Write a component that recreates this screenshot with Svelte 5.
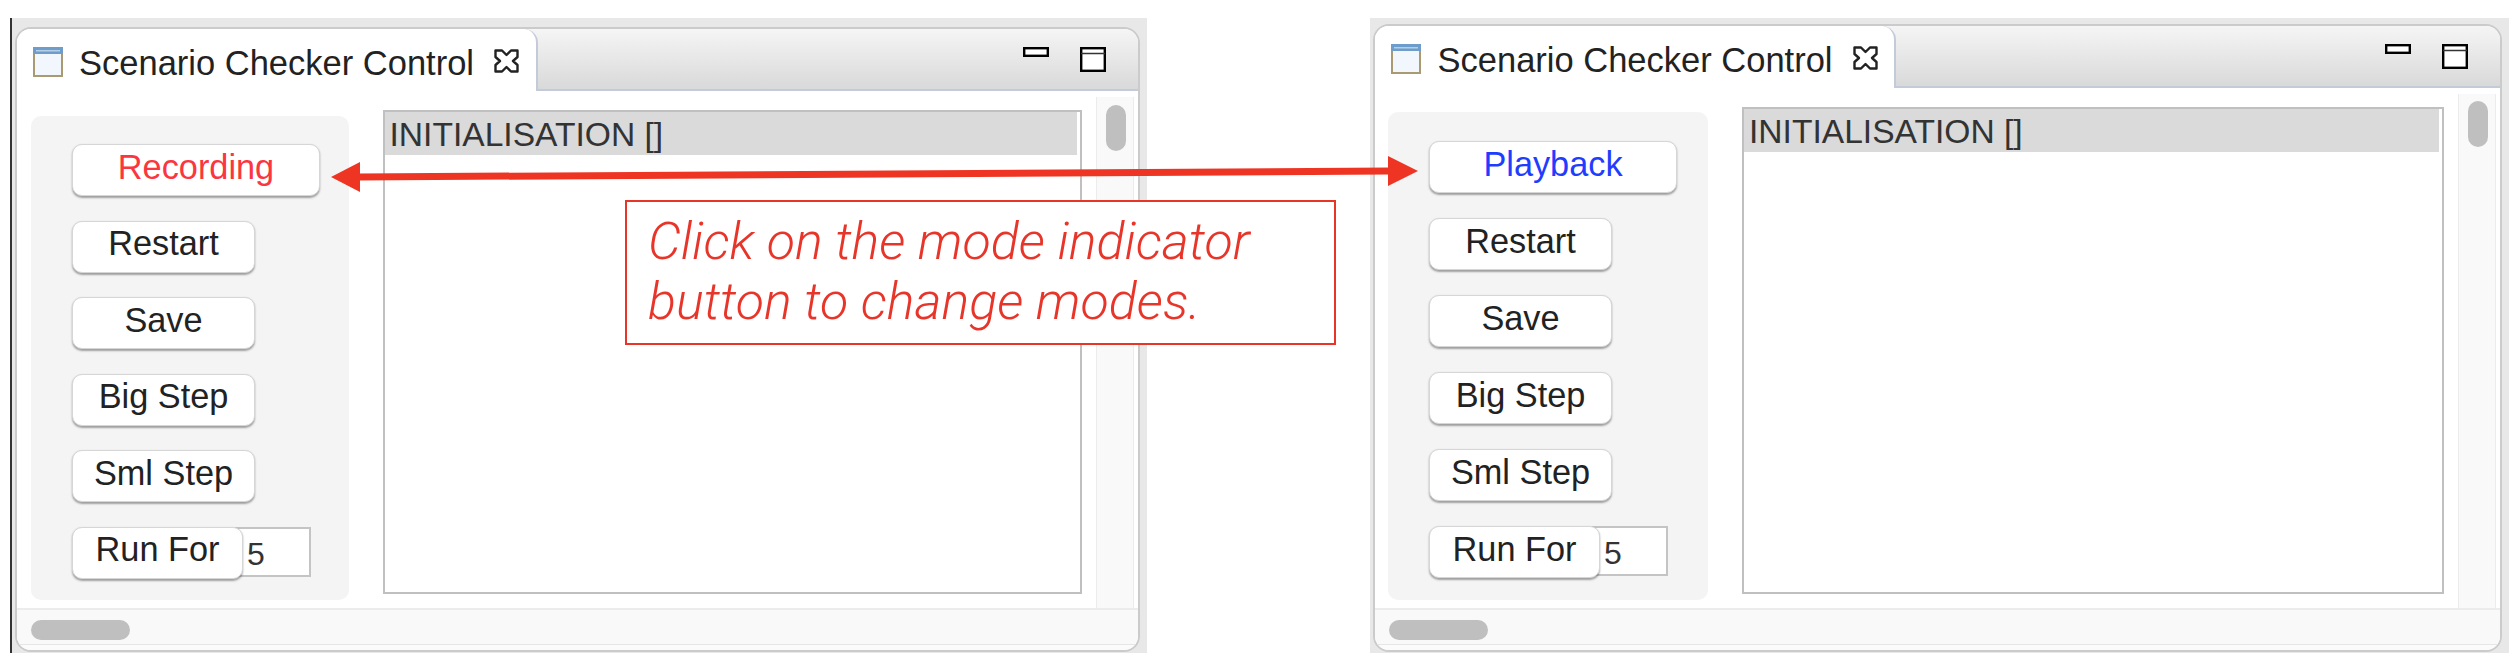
<script>
  const labels = ['Restart', 'Save', 'Big Step', 'Sml Step'];
  const views = [
    { side: 'left', mode: 'Recording' },
    { side: 'right', mode: 'Playback' }
  ];
</script>

<div class="page">
  {#each views as view}
    <div class="frame {view.side}">
      <div class="window">
        <div class="bar">
          <div class="tab">
            <svg class="view-icon" width="30" height="30" viewBox="0 0 30 30">
              <rect x="1" y="1" width="28" height="28" fill="#f1f7fc" stroke="#a99a73" stroke-width="2" />
              <rect x="0" y="0" width="30" height="7" fill="#6f9dcb" />
              <rect x="3" y="3" width="24" height="1.5" fill="#b5cfe6" />
            </svg>
            <span class="title">Scenario Checker Control</span>
            <svg class="close" width="25" height="24" viewBox="0 0 25 24">
              <path d="M1.5 1.5H8L12.5 6L17 1.5H23.5V8L19 12L23.5 16V22.5H17L12.5 18L8 22.5H1.5V16L6 12L1.5 8Z" fill="#fff" stroke="#222" stroke-width="2.4" stroke-linejoin="round" />
            </svg>
          </div>
          <div class="tools">
            <svg width="26" height="10" viewBox="0 0 26 10">
              <rect x="1.2" y="1.2" width="23.6" height="7.6" fill="#fff" stroke="#000" stroke-width="2.4" />
            </svg>
            <svg width="26" height="25" viewBox="0 0 26 25">
              <rect x="1.2" y="1.2" width="23.6" height="22.6" fill="#fff" stroke="#000" stroke-width="2.4" />
              <path d="M1 6.5H25" stroke="#333" stroke-width="1.6" />
            </svg>
          </div>
        </div>

        <div class="body">
          <div class="panel">
            <button class="btn wide {view.side}-mode">{view.mode}</button>
            {#each labels as label}
              <button class="btn">{label}</button>
            {/each}
            <div class="run">
              <button class="btn short">Run For</button>
              <input class="count" value="5" />
            </div>
          </div>

          <div class="trace">
            <div class="row">INITIALISATION []</div>
          </div>

          <div class="vscroll"><div class="vthumb"></div></div>
        </div>

        <div class="hscroll"><div class="hthumb"></div></div>
        <div class="foot"></div>
      </div>
    </div>
  {/each}

  <svg class="arrow" width="2516" height="668" viewBox="0 0 2516 668">
    <path d="M358 177L1390 171" stroke="#ee3524" stroke-width="7" />
    <path d="M331 177L360 162V192Z" fill="#ee3524" />
    <path d="M1418 171L1388 156V186Z" fill="#ee3524" />
  </svg>

  <div class="note">Click on the mode indicator<br />button to change modes.</div>
</div>

<style>
  :global(body) {
    margin: 0;
    background: #fff;
  }

  .page {
    position: relative;
    display: flex;
    gap: 222.5px;
    width: 2516px;
    height: 668px;
    box-sizing: border-box;
    padding: 18px 0 15px 9.5px;
    font-family: "Liberation Sans", Arial, sans-serif;
    overflow: hidden;
  }

  .frame {
    display: flex;
    box-sizing: border-box;
    background: #e8e8e8;
    padding-bottom: 1px;
    padding-right: 7px;
  }

  .frame.left {
    width: 1137.5px;
    padding-top: 9px;
    padding-left: 3px;
    border-left: 2px solid #333;
    --panel-left: 14px;
    --panel-top: 25px;
    --panel-width: 318px;
    --panel-pad: 28px;
    --trace-left: 34px;
    --thumb-top: 8px;
    --btn-gap: 24.6px;
  }

  .frame.right {
    width: 1139.5px;
    padding-top: 6px;
    padding-left: 3.5px;
    --panel-left: 12.5px;
    --panel-top: 24px;
    --panel-width: 320px;
    --panel-pad: 29px;
    --trace-left: 34.5px;
    --thumb-top: 7px;
    --btn-gap: 25px;
  }

  .window {
    flex: 1;
    display: flex;
    flex-direction: column;
    background: #fff;
    border: 2px solid #cbcbcb;
    border-radius: 16px;
    overflow: hidden;
  }

  .bar {
    display: flex;
    height: 62px;
    flex-shrink: 0;
    background: linear-gradient(#f5f5f5, #d8d8d8);
  }

  .tab {
    display: flex;
    align-items: flex-start;
    width: 521px;
    box-sizing: border-box;
    padding: 18px 0 0 16px;
    background: #fff;
    border-right: 2px solid #c3cada;
    border-top-right-radius: 14px;
  }

  .view-icon {
    flex-shrink: 0;
  }

  .title {
    margin-left: 16.5px;
    margin-top: -3px;
    font-size: 34.5px;
    line-height: 38px;
    color: #222;
    white-space: nowrap;
  }

  .close {
    margin-left: 20px;
    margin-top: 2px;
    flex-shrink: 0;
  }

  .tools {
    flex: 1;
    display: flex;
    align-items: flex-start;
    justify-content: flex-end;
    gap: 31px;
    padding: 18px 32px 0 0;
    border-bottom: 2px solid #c3cada;
  }

  .body {
    flex: 1;
    display: flex;
    min-height: 0;
  }

  .panel {
    display: flex;
    flex-direction: column;
    align-items: flex-start;
    gap: var(--btn-gap);
    width: var(--panel-width);
    box-sizing: border-box;
    margin: var(--panel-top) 0 8px var(--panel-left);
    padding: var(--panel-pad) 0 0 41.5px;
    background: #f4f4f4;
    border-radius: 10px;
  }

  .btn {
    width: 183px;
    height: 52px;
    padding: 0 0 6px;
    background: #fff;
    border: 1px solid #d6d6d6;
    border-radius: 10px;
    box-shadow: 0 1.5px 2px rgba(0, 0, 0, 0.35);
    font-family: inherit;
    font-size: 34.3px;
    color: #222;
  }

  .btn.wide {
    width: 248px;
  }

  .left-mode {
    color: #fb3640;
  }

  .right-mode {
    color: #1f3dff;
  }

  .run {
    display: flex;
    align-items: flex-start;
  }

  .btn.short {
    position: relative;
    width: 171px;
  }

  .count {
    width: 76px;
    height: 50px;
    box-sizing: border-box;
    margin-left: -8px;
    padding: 5px 0 0 10px;
    border: 2px solid #c4c4c4;
    background: #fff;
    font-family: inherit;
    font-size: 32px;
    color: #333;
    outline: none;
  }

  .trace {
    flex: 1;
    margin: 19px 14px 14px var(--trace-left);
    border: 2px solid #c0c0c0;
    background: #fff;
  }

  .row {
    height: 43px;
    margin-right: 3px;
    padding-left: 5px;
    background: #dadada;
    font-size: 33.6px;
    line-height: 45px;
    color: #333;
    white-space: nowrap;
  }

  .vscroll {
    width: 38px;
    box-sizing: border-box;
    margin: 6px 4px 0 0;
    padding: var(--thumb-top) 0 0 9px;
    background: #f9f9f9;
    border-left: 1px solid #ececec;
    border-right: 1px solid #ececec;
  }

  .vthumb {
    width: 20px;
    height: 46px;
    background: #bfbfbf;
    border-radius: 10px;
  }

  .hscroll {
    height: 37px;
    flex-shrink: 0;
    box-sizing: border-box;
    padding: 10px 0 0 14px;
    background: #f9f9f9;
    border-top: 2px solid #ececec;
    border-bottom: 1px solid #e6e6e6;
  }

  .hthumb {
    width: 99px;
    height: 20px;
    background: #bfbfbf;
    border-radius: 10px;
  }

  .foot {
    height: 5px;
    flex-shrink: 0;
    background: #fbfbfb;
  }

  /* annotation layered over the two windows */
  .arrow {
    position: absolute;
    left: 0;
    top: 0;
    pointer-events: none;
  }

  .note {
    position: absolute;
    left: 625px;
    top: 200px;
    width: 711px;
    height: 145px;
    box-sizing: border-box;
    padding: 10px 0 0 21px;
    background: #fff;
    border: 2px solid #e8352a;
    font-family: Roboto, "Liberation Sans", sans-serif;
    font-style: italic;
    font-weight: 300;
    font-size: 52px;
    line-height: 60px;
    color: #e8352a;
    white-space: nowrap;
  }
</style>
